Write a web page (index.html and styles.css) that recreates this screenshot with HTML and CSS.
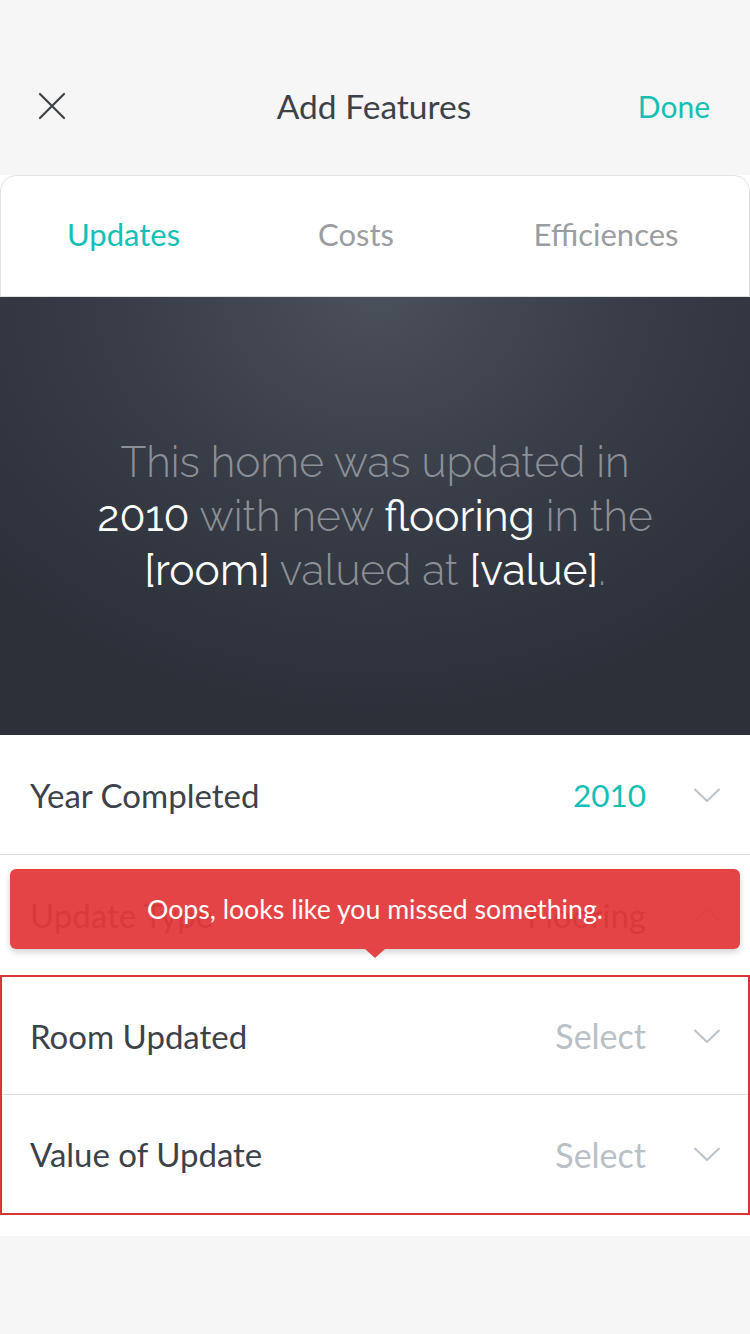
FILE: index.html
```html
<!DOCTYPE html>
<html>
<head>
<meta charset="utf-8">
<link rel="stylesheet" href="styles.css">
</head>
<body>
<div class="screen">
  <header class="topbar">
    <button class="close" aria-label="Close">
      <svg width="28" height="28" viewBox="0 0 28 28"><path d="M2 2 L26 26 M26 2 L2 26" stroke="#3d424a" stroke-width="2.2" fill="none" stroke-linecap="round"/></svg>
    </button>
    <h1 class="title">Add Features</h1>
    <span class="done">Done</span>
  </header>
  <main class="card">
    <nav class="tabs">
      <span class="tab active">Updates</span>
      <span class="tab">Costs</span>
      <span class="tab">Efficiences</span>
    </nav>
    <section class="hero">
      <p class="sentence">This home was updated in <b>2010</b> with new <b>flooring</b> in the <b>[room]</b> valued at <b>[value]</b>.</p>
    </section>
    <div class="rows">
      <div class="row">
        <span class="label">Year Completed</span>
        <span class="value teal">2010</span>
        <svg class="chev" width="26" height="14" viewBox="0 0 26 14"><path d="M0.5 1 L13 13 L25.5 1" stroke="#bcc3ca" stroke-width="2" fill="none"/></svg>
      </div>
      <div class="row typerow">
        <span class="label">Update Type</span>
        <span class="value">Flooring</span>
        <svg class="chev" width="26" height="14" viewBox="0 0 26 14"><path d="M0.5 13 L13 1 L25.5 13" stroke="#bcc3ca" stroke-width="2" fill="none"/></svg>
        <div class="tooltip">Oops, looks like you missed something.</div>
      </div>
      <div class="missing">
        <div class="row">
          <span class="label">Room Updated</span>
          <span class="value muted">Select</span>
          <svg class="chev" width="26" height="14" viewBox="0 0 26 14"><path d="M0.5 1 L13 13 L25.5 1" stroke="#bcc3ca" stroke-width="2" fill="none"/></svg>
        </div>
        <div class="row last">
          <span class="label">Value of Update</span>
          <span class="value muted">Select</span>
          <svg class="chev" width="26" height="14" viewBox="0 0 26 14"><path d="M0.5 1 L13 13 L25.5 1" stroke="#bcc3ca" stroke-width="2" fill="none"/></svg>
        </div>
      </div>
      <div class="spacer"></div>
    </div>
  </main>
</div>
</body>
</html>
```

FILE: styles.css
```css
* { box-sizing: border-box; }
html, body { margin: 0; padding: 0; }
body {
  background: #f6f6f6;
  font-family: "Source Sans Pro", Lato, "Open Sans", sans-serif;
  color: #3d424a;
  width: 750px;
  height: 1334px;
  overflow: hidden;
}
.screen { display: flex; flex-direction: column; }
.topbar {
  height: 175px;
  padding: 36px 40px 0 38px;
  display: grid;
  grid-template-columns: 1fr auto 1fr;
  align-items: center;
}
.close {
  border: 0; background: none; padding: 0; width: 28px; height: 28px;
  display: flex;
  justify-self: start;
}
.title {
  margin: 0;
  font-weight: 400;
  font-size: 33.5px;
  color: #3d424a;
}
.done {
  font-size: 30px;
  color: #14c0b5;
  justify-self: end;
}
.card {
  background: #fff;
  display: flex;
  flex-direction: column;
}
.tabs {
  height: 122px;
  display: grid;
  grid-template-columns: 248px 214px 1fr;
  align-items: center;
  border: 1px solid #e2e2e2;
  border-radius: 16px 16px 0 0;
  background: #fff;
  padding-bottom: 4px;
}
.tab {
  font-size: 31px;
  color: #9b9da2;
  text-align: center;
}
.tab:first-child { text-align: left; padding-left: 66px; }
.tab.active { color: #14c0b5; }
.hero {
  height: 438px;
  background: radial-gradient(ellipse 520px 420px at 375px 0px, #4a505a 0%, #363b45 55%, #2b3039 100%);
  display: flex;
  align-items: center;
  justify-content: center;
  padding: 0 80px 6px;
}
.sentence {
  margin: 0;
  font-family: Raleway, Lato, sans-serif;
  font-weight: 300;
  font-size: 42.5px;
  line-height: 54px;
  text-align: center;
  color: #8c9096;
  position: relative;
  top: 3px;
}
.sentence b { font-weight: 400; color: #fff; }
.rows { background: #fff; display: flex; flex-direction: column; }
.row {
  height: 120px;
  display: flex;
  align-items: center;
  padding: 0 30px;
  border-bottom: 1px solid #e0e0e0;
  position: relative;
}
.label { font-size: 33px; color: #3d424a; flex: 1; }
.value { font-size: 33px; margin-right: 48px; color: #3d424a; }
.value.teal { color: #14c0b5; font-size: 31.5px; }
.value.muted { color: #b9c0c6; font-size: 34px; }
.chev { flex: none; }
.typerow { border-bottom: 0; }
.tooltip {
  position: absolute;
  left: 10px;
  right: 10px;
  top: 14px;
  height: 80px;
  background: rgba(226, 56, 58, 0.94);
  border-radius: 6px;
  box-shadow: 0 3px 6px rgba(0,0,0,0.18);
  color: #fff;
  font-size: 26.7px;
  display: flex;
  align-items: center;
  justify-content: center;
}
.tooltip::after {
  content: "";
  position: absolute;
  left: 50%;
  bottom: -9px;
  margin-left: -10px;
  width: 0; height: 0;
  border-left: 10px solid transparent;
  border-right: 10px solid transparent;
  border-top: 9px solid rgba(226, 56, 58, 0.94);
}
.missing {
  border: 2px solid #d93538;
}
.missing .row { padding-left: 28px; padding-right: 28px; height: 118px; }
.missing .row.last { border-bottom: 0; }
.spacer { height: 21px; background: #fff; }
```
